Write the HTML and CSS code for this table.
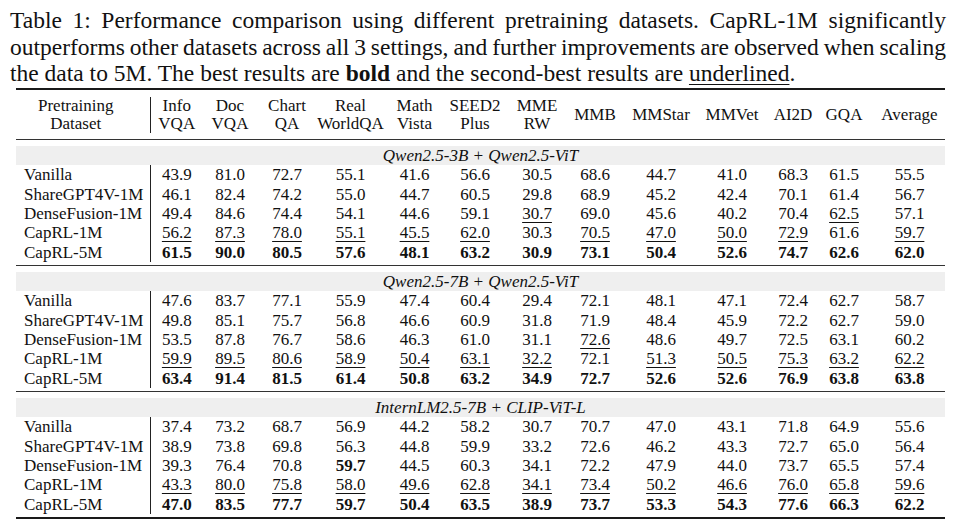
FILE: index.html
```html
<!DOCTYPE html>
<html lang="en">
<head>
<meta charset="utf-8">
<title>Table 1</title>
<link rel="stylesheet" href="styles.css">
</head>
<body>
<div class="page">
  <p class="caption">
    <span class="cap-line just">Table 1: Performance comparison using different pretraining datasets. CapRL-1M significantly</span>
    <span class="cap-line just tight">outperforms other datasets across all 3 settings, and further improvements are observed when scaling</span>
    <span class="cap-line">the data to 5M. The best results are <b>bold</b> and the second-best results are <u class="ul">underlined</u>.</span>
  </p>
  <table class="results">
    <colgroup>
      <col class="c-name">
      <col style="width:53px"><col style="width:54px"><col style="width:60px"><col style="width:67px">
      <col style="width:61px"><col style="width:60px"><col style="width:64px"><col style="width:52px">
      <col style="width:80px"><col style="width:62px"><col style="width:60px"><col style="width:42px">
      <col style="width:80px">
    </colgroup>
    <tbody>
      <tr class="sp sp-top"><td colspan="14"></td></tr>
      <tr class="head">
        <td class="name hname">Pretraining<br>Dataset</td>
        <td>Info<br>VQA</td><td>Doc<br>VQA</td><td>Chart<br>QA</td><td>Real<br>WorldQA</td>
        <td>Math<br>Vista</td><td>SEED2<br>Plus</td><td>MME<br>RW</td><td>MMB</td>
        <td>MMStar</td><td>MMVet</td><td>AI2D</td><td>GQA</td><td class="avg">Average</td>
      </tr>
      <tr class="sp sp-mid"><td colspan="14"></td></tr>
      <tr class="sp sp-after"><td colspan="14"></td></tr>

      <tr class="band"><td colspan="14"><i>Qwen2.5-3B + Qwen2.5-ViT</i></td></tr>
      <tr><td class="name">Vanilla</td><td>43.9</td><td>81.0</td><td>72.7</td><td>55.1</td><td>41.6</td><td>56.6</td><td>30.5</td><td>68.6</td><td>44.7</td><td>41.0</td><td>68.3</td><td>61.5</td><td class="avg">55.5</td></tr>
      <tr><td class="name">ShareGPT4V-1M</td><td>46.1</td><td>82.4</td><td>74.2</td><td>55.0</td><td>44.7</td><td>60.5</td><td>29.8</td><td>68.9</td><td>45.2</td><td>42.4</td><td>70.1</td><td>61.4</td><td class="avg">56.7</td></tr>
      <tr><td class="name">DenseFusion-1M</td><td>49.4</td><td>84.6</td><td>74.4</td><td>54.1</td><td>44.6</td><td>59.1</td><td><u class="ul">30.7</u></td><td>69.0</td><td>45.6</td><td>40.2</td><td>70.4</td><td><u class="ul">62.5</u></td><td class="avg">57.1</td></tr>
      <tr><td class="name">CapRL-1M</td><td><u class="ul">56.2</u></td><td><u class="ul">87.3</u></td><td><u class="ul">78.0</u></td><td><u class="ul">55.1</u></td><td><u class="ul">45.5</u></td><td><u class="ul">62.0</u></td><td>30.3</td><td><u class="ul">70.5</u></td><td><u class="ul">47.0</u></td><td><u class="ul">50.0</u></td><td><u class="ul">72.9</u></td><td>61.6</td><td class="avg"><u class="ul">59.7</u></td></tr>
      <tr class="best"><td class="name">CapRL-5M</td><td>61.5</td><td>90.0</td><td>80.5</td><td>57.6</td><td>48.1</td><td>63.2</td><td>30.9</td><td>73.1</td><td>50.4</td><td>52.6</td><td>74.7</td><td>62.6</td><td class="avg">62.0</td></tr>
      <tr class="sp sp-end"><td colspan="14"></td></tr>
      <tr class="sp sp-after"><td colspan="14"></td></tr>

      <tr class="band"><td colspan="14"><i>Qwen2.5-7B + Qwen2.5-ViT</i></td></tr>
      <tr><td class="name">Vanilla</td><td>47.6</td><td>83.7</td><td>77.1</td><td>55.9</td><td>47.4</td><td>60.4</td><td>29.4</td><td>72.1</td><td>48.1</td><td>47.1</td><td>72.4</td><td>62.7</td><td class="avg">58.7</td></tr>
      <tr><td class="name">ShareGPT4V-1M</td><td>49.8</td><td>85.1</td><td>75.7</td><td>56.8</td><td>46.6</td><td>60.9</td><td>31.8</td><td>71.9</td><td>48.4</td><td>45.9</td><td>72.2</td><td>62.7</td><td class="avg">59.0</td></tr>
      <tr><td class="name">DenseFusion-1M</td><td>53.5</td><td>87.8</td><td>76.7</td><td>58.6</td><td>46.3</td><td>61.0</td><td>31.1</td><td><u class="ul">72.6</u></td><td>48.6</td><td>49.7</td><td>72.5</td><td>63.1</td><td class="avg">60.2</td></tr>
      <tr><td class="name">CapRL-1M</td><td><u class="ul">59.9</u></td><td><u class="ul">89.5</u></td><td><u class="ul">80.6</u></td><td><u class="ul">58.9</u></td><td><u class="ul">50.4</u></td><td><u class="ul">63.1</u></td><td><u class="ul">32.2</u></td><td>72.1</td><td><u class="ul">51.3</u></td><td><u class="ul">50.5</u></td><td><u class="ul">75.3</u></td><td><u class="ul">63.2</u></td><td class="avg"><u class="ul">62.2</u></td></tr>
      <tr class="best"><td class="name">CapRL-5M</td><td>63.4</td><td>91.4</td><td>81.5</td><td>61.4</td><td>50.8</td><td>63.2</td><td>34.9</td><td>72.7</td><td>52.6</td><td>52.6</td><td>76.9</td><td>63.8</td><td class="avg">63.8</td></tr>
      <tr class="sp sp-end"><td colspan="14"></td></tr>
      <tr class="sp sp-after"><td colspan="14"></td></tr>

      <tr class="band"><td colspan="14"><i>InternLM2.5-7B + CLIP-ViT-L</i></td></tr>
      <tr><td class="name">Vanilla</td><td>37.4</td><td>73.2</td><td>68.7</td><td>56.9</td><td>44.2</td><td>58.2</td><td>30.7</td><td>70.7</td><td>47.0</td><td>43.1</td><td>71.8</td><td>64.9</td><td class="avg">55.6</td></tr>
      <tr><td class="name">ShareGPT4V-1M</td><td>38.9</td><td>73.8</td><td>69.8</td><td>56.3</td><td>44.8</td><td>59.9</td><td>33.2</td><td>72.6</td><td>46.2</td><td>43.3</td><td>72.7</td><td>65.0</td><td class="avg">56.4</td></tr>
      <tr><td class="name">DenseFusion-1M</td><td>39.3</td><td>76.4</td><td>70.8</td><td><b>59.7</b></td><td>44.5</td><td>60.3</td><td>34.1</td><td>72.2</td><td>47.9</td><td>44.0</td><td>73.7</td><td>65.5</td><td class="avg">57.4</td></tr>
      <tr><td class="name">CapRL-1M</td><td><u class="ul">43.3</u></td><td><u class="ul">80.0</u></td><td><u class="ul">75.8</u></td><td><u class="ul">58.0</u></td><td><u class="ul">49.6</u></td><td><u class="ul">62.8</u></td><td><u class="ul">34.1</u></td><td><u class="ul">73.4</u></td><td><u class="ul">50.2</u></td><td><u class="ul">46.6</u></td><td><u class="ul">76.0</u></td><td><u class="ul">65.8</u></td><td class="avg"><u class="ul">59.6</u></td></tr>
      <tr class="best"><td class="name">CapRL-5M</td><td>47.0</td><td>83.5</td><td>77.7</td><td>59.7</td><td>50.4</td><td>63.5</td><td>38.9</td><td>73.7</td><td>53.3</td><td>54.3</td><td>77.6</td><td>66.3</td><td class="avg">62.2</td></tr>
      <tr class="sp sp-bottom"><td colspan="14"></td></tr>
    </tbody>
  </table>
</div>
</body>
</html>
```

FILE: styles.css
```css
html, body {
  margin: 0;
  padding: 0;
  background: #ffffff;
}

body {
  font-family: "Liberation Serif", "Times New Roman", serif;
  color: #111111;
}

.page {
  padding: 7px 10px 0 10px;
}

.caption {
  margin: 0;
  width: 936px;
  font-size: 23.5px;
  line-height: 26.7px;
}

.cap-line {
  display: block;
  text-align: left;
  white-space: nowrap;
}

.cap-line.just {
  text-align: justify;
  text-align-last: justify;
}

.cap-line.tight {
  word-spacing: -1.6px;
}

.ul {
  text-decoration: underline;
  text-decoration-thickness: 1px;
  text-underline-offset: 3px;
}

.results {
  margin: 1px 0 0 6px;
  width: 929px;
  border-collapse: collapse;
  table-layout: fixed;
  font-size: 17px;
  line-height: 19.4px;
}

.results col.c-name {
  width: 134px;
}

.results td {
  padding: 0;
  text-align: center;
  white-space: nowrap;
}

.results td.name {
  text-align: left;
  padding-left: 8px;
  border-right: 1px solid #222222;
}

.results td.avg {
  padding-left: 9px;
}

.results .head td {
  line-height: 18px;
  height: 36px;
  vertical-align: middle;
}

.results .head td.hname {
  text-align: center;
  padding-left: 0;
  padding-right: 14px;
}

.results .sp td {
  height: 0;
  padding: 0;
  border: none;
}

.results .sp-top td {
  border-top: 2px solid #1a1a1a;
  height: 7px;
}

.results .sp-mid td {
  height: 6px;
  border-bottom: 1px solid #333333;
}

.results .sp-after td {
  height: 6px;
}

.results .sp-end td {
  height: 3px;
  border-bottom: 1px solid #333333;
}

.results .sp-bottom td {
  height: 3px;
  border-bottom: 2px solid #1a1a1a;
}

.results .band td {
  background: #efefef;
  height: 19px;
  line-height: 19px;
  text-align: center;
}

.results .best td {
  font-weight: bold;
}

.results .best td.name {
  font-weight: normal;
}
```
